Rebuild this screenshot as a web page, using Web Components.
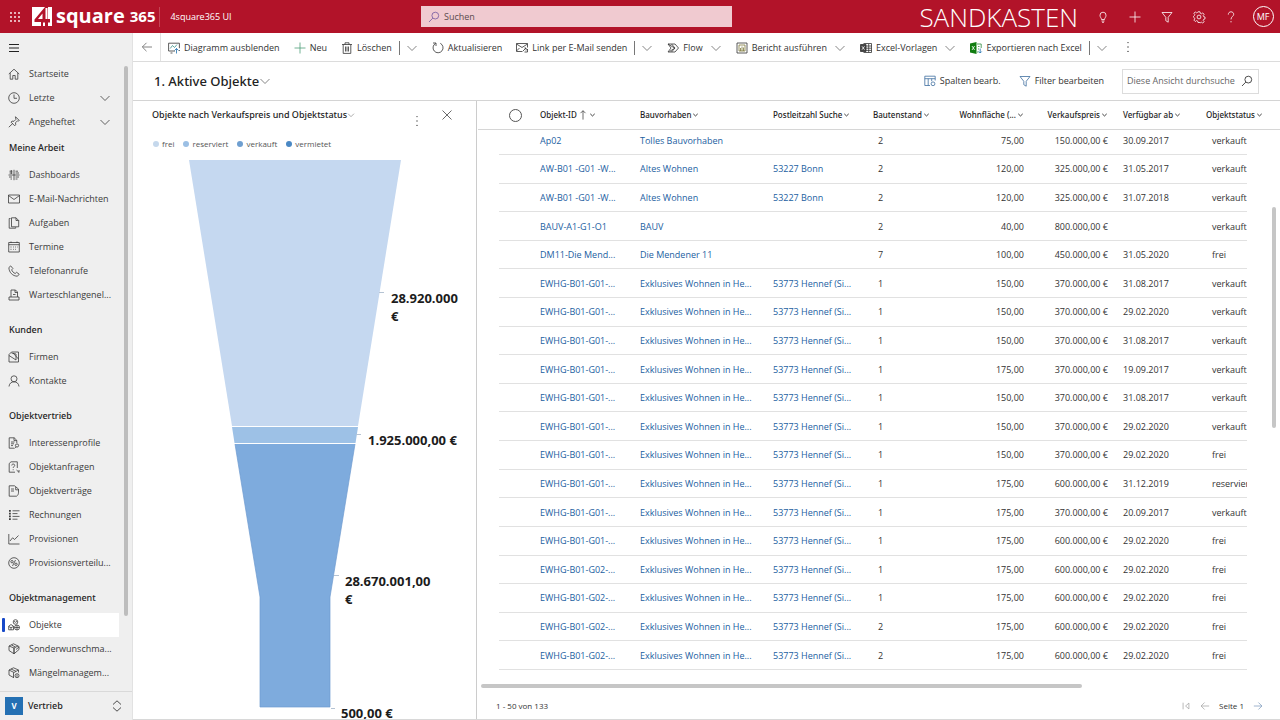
<!DOCTYPE html>
<html lang="de">
<head>
<meta charset="utf-8">
<title>4square365 UI – Aktive Objekte</title>
<style>
  body { margin: 0; font: 9px/12px "Open Sans", "Noto Sans", sans-serif; color: #333; background: #fff; }
</style>
</head>
<body>
<app-shell>
  <top-bar slot="top"></top-bar>
  <side-nav slot="side"></side-nav>
  <command-bar slot="commands"></command-bar>
  <view-bar slot="view" heading="1. Aktive Objekte"></view-bar>
  <funnel-chart slot="chart" heading="Objekte nach Verkaufspreis und Objektstatus"></funnel-chart>
  <data-grid slot="grid"></data-grid>
</app-shell>

<script>
const ICONS = {
  waffle: '<g fill="currentColor" stroke="none"><circle cx="2" cy="2" r=".9"/><circle cx="6" cy="2" r=".9"/><circle cx="10" cy="2" r=".9"/><circle cx="2" cy="6" r=".9"/><circle cx="6" cy="6" r=".9"/><circle cx="10" cy="6" r=".9"/><circle cx="2" cy="10" r=".9"/><circle cx="6" cy="10" r=".9"/><circle cx="10" cy="10" r=".9"/></g>',
  menu: '<path d="M1 2.5h10M1 6h10M1 9.5h10" stroke-width="1.1"/>',
  search: '<circle cx="7.3" cy="4.6" r="3.4"/><path d="M4.8 7.1 1 11"/>',
  bulb: '<path d="M4.5 8.5C4.5 7 3 6.400 3 4.200a3 3 0 0 1 6 0C9 6.400 7.500 7 7.500 8.500zM4.500 10h3M5 11.300h2"/>',
  plus: '<path d="M6 .5v11M.5 6h11"/>',
  filter: '<path d="M1 1.500h10L7.200 6.300v4.900l-2.400-1.500V6.300z"/>',
  gear: '<path d="M5 .8h2l.3 1.500 1.100.500 1.300-.900 1.400 1.400-.900 1.300.500 1.100 1.300.300v1.900l-1.300.400-.500 1.100.900 1.300-1.400 1.400-1.300-.900-1.100.500L7 11.500H5l-.300-1.400-1.100-.500-1.300.900L.900 9.100l.900-1.300-.500-1.100L.500 6.200V5.500l.800-.800.500-1.100L.900 2.300 2.300.900l1.300.900 1.100-.500z"/><circle cx="6" cy="6" r="1.900"/>',
  help: '<path d="M3.300 3.600C3.300 1.800 4.500.800 6 .800s2.700 1 2.700 2.500C8.700 5.400 6 5.600 6 8.400M6 10v1.400"/>',
  back: '<path d="M11 6H1.500M5.500 1.800 1.300 6l4.200 4.200"/>',
  next: '<path d="M1 6h9.500M6.500 1.800 10.700 6l-4.200 4.200"/>',
  first: '<path d="M2.500 2v8M9.500 2.500v7L5.500 6z"/>',
  down: '<path d="m1.500 4 4.500 4.500L10.500 4"/>',
  small: '<path d="m2.200 3.200 3.800 3.600 3.800-3.600" stroke-width="1.500"/>',
  updown: '<path d="M2 4.500 6 .800l4 3.700M2 7.500l4 3.700 4-3.700"/>',
  dots: '<g fill="currentColor" stroke="none"><circle cx="6" cy="1.600" r=".7"/><circle cx="6" cy="6" r=".7"/><circle cx="6" cy="10.400" r=".7"/></g>',
  close: '<path d="m1.500 1.500 9 9M10.500 1.500l-9 9"/>',
  up: '<path d="M6 11.500V1M3 3.800 6 .800l3 3"/>',
  chart: '<path d="M7 9H.600V1.200h10.800v5" /><path d="m2.200 6.500 2.300-3 2 2 2.500-3" stroke="#3a8f86"/><path d="M8.500 11.500v-5m-2 2 2-2 2 2" stroke="#1c6fae"/><path d="M2.500 11h2M11.400 8v1" />',
  trash: '<path d="M1 2.500h10M4 2.500V.800h4v1.700M2.200 2.500v8.900h7.600V2.500M4.500 4.500v5M6 4.500v5M7.500 4.500v5"/>',
  refresh: '<path d="M8.300 1.300A5 5 0 1 1 3.600 1.400M1 1h3v3"/>',
  mail: '<path d="M.500 2h11v8H.500zM.500 2.500 6 6.500l5.500-4"/>',
  maillink: '<path d="M6.500 9.500h-6v-8h11v4M.500 2 6 5.500 11.500 2M.500 9l3-3"/><path d="m7 9 3-3m-1.500 0H10v1.500M10 8.500l1.500-1.500v3H8.500"/>',
  flow: '<path d="M1 2h7l3.500 4L8 10H1l3-4zM4.500 2 8 6l-3.500 4M1 2l6.500 4M8 6 2.500 9.500"/>',
  report: '<path d="M1 1h10v10H1z"/><path d="M3 3h6v6H3zM4.500 9V6M6 9V4.500M7.500 9V5.500" stroke="#7d7a3a"/>',
  xltemplate: '<path d="M3.500 1.500h8v9h-8M6 4h5.500M6 6.200h5.500M6 8.400h5.500M8.700 2v8.500"/><path d="M.500 2.500h5.500v7H.500z" fill="#444"/><path d="m2 4.300 2.500 3.400m0-3.400L2 7.700" stroke="#fff"/>',
  xlexport: '<path d="M0 1.500 6.500 0v12L0 10.500z" fill="#107c10" stroke="none"/><path d="M2 4l2.600 4M4.600 4 2 8" stroke="#fff"/><path d="M7 2h4.200v4M7 10h1.500M8 4.500h1.500M8 7h1" stroke="#2e8b3d"/><path d="M10.200 6.500v4.500m-1.500-1.500 1.500 1.500 1.500-1.500" stroke="#1c6fae"/>',
  columns: '<path d="M6 10.500H.800V1.200h10.400v4.300M.800 3.700h10.400M4.200 3.700v6.800M7.700 3.700v2.500"/><circle cx="9" cy="8.800" r="1.900"/>',
  home: '<path d="M.800 6 6 1.200 11.200 6M2.200 5v6.200h2.600V7.500h2.400v3.700h2.600V5"/>',
  clock: '<circle cx="6" cy="6" r="5.300"/><path d="M6 2.500V6.300h3"/>',
  pin: '<path d="M7.500.700 11.300 4.500l-1 .500-.800-.200-2 2 .200 2-1 1L3 6.100l1-1 2 .200 2-2-.400-1.300zM4.700 7.500.800 11.200"/>',
  dash: '<path d="M6 .800v10.400M.500 6h11M1.500 2.200h3M1.500 4h3M7.500 2.200h2.500M7.500 4h3.500M1 8h3M2.500 10H4M7.500 8h3.500M7.500 10h2M3.300 1v4"/>',
  task: '<path d="M2.500 1.500h-1.300v9.700h6.500v-1M3.500.800h4.500l2.700 2.700v6.300H3.500zM8 .800v2.700h2.700"/>',
  cal: '<path d="M.700 1.500h10.600v9.500H.700zM.700 3.700h10.600M2.500 6h1M5 6h.800M7.200 6h.800M9.200 6h.600M2.500 8.300h1M5 8.300h.800M7.200 8.300h.800M3 .500v1.500M9 .500v1.500"/>',
  phone: '<path d="M2.700.900.900 2.500c0 4.800 3.800 8.700 8.600 8.700l1.700-2-2.600-1.900-1.400 1.200C5.500 7.800 4.400 6.600 3.600 4.900L4.900 3.500z"/>',
  queue: '<path d="M3 8V1h4.500L9.500 3v5M3 8H1v3h10V8H9.500M3 8h6.500M7 1v2.500h2.500M5 5.500h2.500"/>',
  firm: '<path d="M1 11V3.500L3.500 1h7v10zM1 4.500l7 4.500V3L3.500 2M5 2l5.500 6"/>',
  person: '<circle cx="6" cy="3.800" r="3"/><path d="M1 11.500C1.300 8.500 3.300 6.800 6 6.800s4.700 1.700 5 4.700"/>',
  profile: '<path d="M6 11.200H1.200V.800h5l2.600 2.600V6M6 .800v2.800h2.800M3 5h3.500M3 6.800h3M3 8.600h2"/><circle cx="9" cy="8.500" r="1.600"/><path d="m8 9.800-1.500 1.700"/>',
  inquiry: '<path d="M7 11.200H1.200V2.500L3 .800h6.300V7M3.800 4.500C3.800 3.500 4.400 3 5.200 3s1.500.500 1.500 1.400C6.700 5.500 5.200 5.600 5.200 7M5.200 8.300v.900M8.500 9l2.500 2.300M11 9v2.500"/>',
  contract: '<path d="M3 11.200H1.200V.800h5.500l1 1M3 11.200h5.500c1.500-1 2-2 2-4V4L7.700 1.800v3h2.800M3 4h3M3 6h3"/>',
  list: '<path d="M4.500 1.800h7M4.500 4.600h5M4.500 7.400h7M4.500 10.200h5"/><path d="M1 1.800h1.800M1 4.600h1.800M1 7.400h1.800M1 10.200h1.800" stroke-width="1.800"/>',
  line: '<path d="M.800 1v10h10.700M2 8l2.600-3.200 2 1.700L10.500 2.500"/>',
  percent: '<circle cx="6" cy="6" r="5.300"/><circle cx="4" cy="4.700" r="1.200"/><circle cx="8" cy="7.300" r="1.200"/><path d="m7.500 3-3 6"/>',
  objects: '<circle cx="7.500" cy="3" r="2.300"/><path d="M.700 7.200 3 5.500l2.500 1.700v3.600H.700zM.700 7.500 3 8.700l2.500-1.200M3 8.700v2.100"/><circle cx="9" cy="8.500" r="2.500"/><path d="M9 6v5M6.500 8.500h5M6 2.300l1.500 1 1.500-1"/>',
  box: '<path d="M6 10.800 1 7.500V3l4.500-2.200L10 3l-4 2zM6 5v5.800M1 3l5 2M6 10.800l5-4.300V3.500L10 3M8 6.500 11 4M3.500 2l4 2"/>',
  boxwarn: '<path d="M6 10.800 1 8V3l4.500-2.200L10.500 3v2.500M1 3l5 2.500L10.500 3M5.500 5.500v5M3 2l5 2.300"/><circle cx="9" cy="8.700" r="2"/><path d="M9 7.500v2.400"/>'
};

const define = (name, css, html) => {
  customElements.define(name, class extends HTMLElement {
    connectedCallback() {
      if (this.shadowRoot) return;
      const root = this.attachShadow({ mode: 'open' });
      root.innerHTML = `<style>:host,*{box-sizing:border-box}button{all:unset;box-sizing:border-box;cursor:pointer;white-space:nowrap}input{font:inherit;color:inherit}${css}</style>` +
        (typeof html === 'function' ? html(this) : html);
    }
  });
};

define('ui-icon',
  ':host{display:inline-flex;flex:none;width:12px;height:12px}svg{width:100%;height:100%;overflow:visible}',
  el => `<svg viewBox="0 0 12 12" fill="none" stroke="currentColor" stroke-width=".8" aria-hidden="true">${ICONS[el.getAttribute('name')]}</svg>`);

define('app-shell', `
  :host{display:grid;grid-template:33px minmax(0,1fr)/133px minmax(0,1fr);height:100vh}
  .top{grid-column:1/3}
  main{display:flex;flex-direction:column;min-width:0;min-height:0;border-bottom:1px solid #d8d8d8}
  .split{display:flex;flex:1;min-height:0}
  ::slotted([slot=grid]){flex:1;min-width:0}`,
  `<div class="top"><slot name="top"></slot></div><slot name="side"></slot>
   <main><slot name="commands"></slot><slot name="view"></slot>
   <div class="split"><slot name="chart"></slot><slot name="grid"></slot></div></main>`);

define('top-bar', `
  :host{display:grid;grid-template-columns:421fr 311fr 548fr;align-items:center;height:33px;background:#b21329;color:#fff}
  .left,.right{display:flex;align-items:center;min-width:0}
  .waffle{width:30px;height:33px;display:flex;align-items:center;justify-content:center}
  .brand{display:flex;align-items:center;height:20px;color:#fff;text-decoration:none;font-weight:700;border-right:1px solid #c54555;padding:0 4px 0 2px;margin-right:10px}
  .brand svg{width:20px;height:20px;margin-right:4px}
  .name,.num{line-height:20px;padding-bottom:2px}
  .name{font-size:20px;margin-right:5px}
  .num{font-size:15px}
  .search{display:flex;align-items:center;gap:4px;height:21px;padding:0 7px;background:#f0cad0;color:#5c4a4e}
  .search ui-icon{color:#7257a0}
  .search input{flex:1;min-width:0;border:0;padding:0;background:none;outline:0}
  .search input::placeholder{color:inherit;opacity:1}
  .right{justify-content:flex-end;padding-right:1px}
  .env{font-size:26px;line-height:32px;font-weight:300;margin-right:9px}
  .right button{width:32px;height:32px;display:flex;align-items:center;justify-content:center}
  .me span{width:21px;height:21px;border:1px solid #fff;border-radius:50%;line-height:19px;text-align:center}`,
  `<div class="left"><button class="waffle" aria-label="App-Startfeld"><ui-icon name="waffle"></ui-icon></button>
   <a class="brand" href="#"><svg viewBox="0 0 20 20" aria-hidden="true"><path d="M0 0h13L2.500 12.500V15H9v4H0zM20 0v19h-4v-3.500h2V12h-2V0z" fill="#fff"/><path d="M10.500 6.500V12H6z" fill="#fff"/><path d="M14.500 1v11M12 15.500V19" stroke="#fff" stroke-width="2"/></svg><span class="name">square</span><span class="num">365</span></a><span>4square365 UI</span></div>
   <label class="search"><ui-icon name="search"></ui-icon><input type="text" placeholder="Suchen" aria-label="Suchen"></label>
   <div class="right"><span class="env">SANDKASTEN</span>
   <button aria-label="Assistent"><ui-icon name="bulb"></ui-icon></button><button aria-label="Neu"><ui-icon name="plus"></ui-icon></button><button aria-label="Filter"><ui-icon name="filter"></ui-icon></button><button aria-label="Einstellungen"><ui-icon name="gear"></ui-icon></button><button aria-label="Hilfe"><ui-icon name="help"></ui-icon></button><button class="me"><span>MF</span></button></div>`);

define('nav-item', `
  :host{display:block}
  a{display:flex;align-items:center;gap:9px;height:24px;padding:0 8px;color:#3b3b3b;text-decoration:none;position:relative;white-space:nowrap}
  .t{flex:1}
  :host([active]) a{background:#fff}
  :host([active]) a::before{content:"";position:absolute;left:2px;top:5px;width:3px;height:14px;border-radius:1px;background:#1749c8}`,
  el => `<a href="#"><ui-icon name="${el.getAttribute('icon')}"></ui-icon><span class="t"><slot></slot></span>${el.hasAttribute('more') ? '<ui-icon name="down"></ui-icon>' : ''}</a>`);

const NAV = [
  ['', ['home', 'Startseite'], ['clock', 'Letzte', 'more'], ['pin', 'Angeheftet', 'more']],
  ['Meine Arbeit', ['dash', 'Dashboards'], ['mail', 'E-Mail-Nachrichten'], ['task', 'Aufgaben'], ['cal', 'Termine'], ['phone', 'Telefonanrufe'], ['queue', 'Warteschlangenel...']],
  ['Kunden', ['firm', 'Firmen'], ['person', 'Kontakte']],
  ['Objektvertrieb', ['profile', 'Interessenprofile'], ['inquiry', 'Objektanfragen'], ['contract', 'Objektverträge'], ['list', 'Rechnungen'], ['line', 'Provisionen'], ['percent', 'Provisionsverteilu...']],
  ['Objektmanagement', ['objects', 'Objekte', 'active'], ['box', 'Sonderwunschma...'], ['boxwarn', 'Mängelmanagem...']]
];
define('side-nav', `
  :host{display:flex;flex-direction:column;min-height:0;background:#efefef;border-right:1px solid #e2e2e2}
  .menu{height:29px;padding:0 8px;display:flex;align-items:center;color:#222}
  nav{flex:1;min-height:0;overflow:hidden;position:relative;padding-right:13px}
  nav::after{content:"";position:absolute;right:4px;top:4px;bottom:75px;width:4px;border-radius:2px;background:#bdbdbd}
  h2{margin:0;font:500 9px/28px "Noto Sans","Open Sans",sans-serif;color:#222;padding-left:9px;padding-bottom:1px}
  section+section+section{padding-top:9px}
  .area{display:flex;align-items:center;height:29px;border-top:1px solid #d9d9d9;padding:0 9px 0 5px;font-family:"Noto Sans","Open Sans",sans-serif;font-weight:500;color:#222}
  .area b{width:18px;height:18px;line-height:18px;text-align:center;background:#2470b3;color:#fff;margin-right:5px;font-size:8px}
  .area span{flex:1}`,
  `<button class="menu" aria-label="Menü"><ui-icon name="menu"></ui-icon></button>
   <nav>${NAV.map(([h, ...items]) => `<section>${h ? `<h2>${h}</h2>` : ''}${items.map(([i, t, f = '']) => `<nav-item icon="${i}" ${f}>${t}</nav-item>`).join('')}</section>`).join('')}</nav>
   <button class="area"><b>V</b><span>Vertrieb</span><ui-icon name="updown"></ui-icon></button>`);

const CMDS = [
  ['chart', 'Diagramm ausblenden'], ['plus', 'Neu', '', 'green'], ['trash', 'Löschen', 'split'], ['refresh', 'Aktualisieren'],
  ['maillink', 'Link per E-Mail senden', 'split'], ['flow', 'Flow', 'menu'], ['report', 'Bericht ausführen', 'menu'],
  ['xltemplate', 'Excel-Vorlagen', 'menu'], ['xlexport', 'Exportieren nach Excel', 'split']
];
define('command-bar', `
  :host{display:flex;height:29px;border-bottom:1px solid #dcdcdc}
  .back{width:28px;display:flex;align-items:center;justify-content:center;border-right:1px solid #e2e2e2;margin-right:7px;color:#666}
  .cmd,.group{display:flex;align-items:center}
  .cmd{gap:4px}.group{margin-right:14px;padding-top:2px}
  .green ui-icon{color:#4fa07a}
  .split{border-left:1px solid #777;height:14px;padding-left:6px;margin-left:7px}
  .menu{margin-left:7px}
  .split,.menu{display:flex;align-items:center;color:#666}
  .more{display:flex;align-items:center}`,
  `<button class="back" aria-label="Zurück"><ui-icon name="back"></ui-icon></button>` +
  CMDS.map(([i, t, kind, cls = '']) => `<div class="group"><button class="cmd ${cls}"><ui-icon name="${i}"></ui-icon><span>${t}</span></button>${kind ? `<button class="${kind}" aria-label="${t}: weitere Optionen"><ui-icon name="down"></ui-icon></button>` : ''}</div>`).join('') +
  `<button class="more" aria-label="Weitere Befehle"><ui-icon name="dots"></ui-icon></button>`);

define('view-bar', `
  :host{display:flex;align-items:center;height:39px;border-bottom:1px solid #d4d4d4;padding:0 21px}
  h1{margin:0;font:500 13px/18px "Noto Sans","Open Sans",sans-serif;color:#222}
  .pick{display:flex;align-items:center;flex:1;color:#666}
  .act{display:flex;align-items:center;gap:4px;margin-right:18px}
  .act ui-icon{color:#3f6f9f}
  .find{display:flex;align-items:center;width:137px;height:25px;border:1px solid #dcdcdc;padding:0 5px 0 4px;color:#222}
  .find input{flex:1;min-width:0;border:0;outline:0;padding:0;background:none;text-overflow:clip}
  .find input::placeholder{color:#666;opacity:1}`,
  el => `<div class="pick"><h1>${el.getAttribute('heading')}</h1><ui-icon name="down"></ui-icon></div>
   <button class="act"><ui-icon name="columns"></ui-icon>Spalten bearb.</button>
   <button class="act"><ui-icon name="filter"></ui-icon>Filter bearbeiten</button>
   <label class="find"><input type="text" placeholder="Diese Ansicht durchsuche" aria-label="Diese Ansicht durchsuchen"><ui-icon name="search"></ui-icon></label>`);

define('funnel-chart', `
  :host{display:flex;flex-direction:column;width:344px;flex:none;border-right:1px solid #ccc;overflow:hidden}
  header{display:flex;align-items:center;height:29px;padding:0 23px 0 19px}
  h2{margin:0;font:500 9px/12px "Noto Sans","Open Sans",sans-serif;color:#222}
  .pick{display:flex;align-items:center;flex:1;color:#666}
  .pick ui-icon{width:8px;height:8px}
  header button{display:flex;color:#444}
  .dots{padding-top:12px;margin-right:18px}
  ul{list-style:none;display:flex;gap:9px;margin:0;padding:10px 20px;font-size:8px;line-height:12px;color:#555}
  li{display:flex;align-items:center;gap:3px}
  li::before{content:"";width:6px;height:6px;border-radius:50%;background:var(--c)}
  svg{display:block;width:343px;height:559px;flex:none;overflow:visible;font-size:13px;font-weight:700}
  text{fill:#1c1c1c}`,
  el => `<header><div class="pick"><h2>${el.getAttribute('heading')}</h2><ui-icon name="down"></ui-icon></div>
   <button class="dots" aria-label="Mehr"><ui-icon name="dots"></ui-icon></button><button aria-label="Schließen"><ui-icon name="close"></ui-icon></button></header>
   <ul><li style="--c:#c5d8ec">frei</li><li style="--c:#9bbfe4">reserviert</li><li style="--c:#6f9fd0">verkauft</li><li style="--c:#4a88c4">vermietet</li></ul>
   <svg viewBox="0 0 343 559" role="img" aria-label="Trichterdiagramm">
    <path d="M56 0H268L225 266H99z" fill="#c5d8f0"/>
    <path d="M99 267H225L222.500 283H101.500z" fill="#9dc1e6"/>
    <path d="M102 284H222L197 437V547H127V437z" fill="#7eabdd"/>
    <path d="M102 284 127 437V547H197V437L222 284" fill="none" stroke="#6f9bd0" stroke-width=".7"/>
    <path d="M246 132.500h5M223 274.500h5M201 415.500h5M198 548.500h4" stroke="#b5c3d3"/>
    <text x="258" y="143">28.920.000</text><text x="258" y="161">€</text>
    <text x="235" y="285">1.925.000,00 €</text>
    <text x="212" y="426">28.670.001,00</text><text x="212" y="444">€</text>
    <text x="208" y="558">500,00 €</text>
   </svg>`);

const E1 = 'EWHG-B01-G01-...', E2 = 'EWHG-B01-G02-...', EX = 'Exklusives Wohnen in He...', HN = '53773 Hennef (Si...';
const ROWS = [
  ['Ap02', 'Tolles Bauvorhaben', '', '2', '75,00', '150.000,00 €', '30.09.2017', 'verkauft'],
  ['AW-B01 -G01 -W...', 'Altes Wohnen', '53227 Bonn', '2', '120,00', '325.000,00 €', '31.05.2017', 'verkauft'],
  ['AW-B01 -G01 -W...', 'Altes Wohnen', '53227 Bonn', '2', '120,00', '325.000,00 €', '31.07.2018', 'verkauft'],
  ['BAUV-A1-G1-O1', 'BAUV', '', '2', '40,00', '800.000,00 €', '', 'verkauft'],
  ['DM11-Die Mend...', 'Die Mendener 11', '', '7', '100,00', '450.000,00 €', '31.05.2020', 'frei'],
  [E1, EX, HN, '1', '150,00', '370.000,00 €', '31.08.2017', 'verkauft'],
  [E1, EX, HN, '1', '150,00', '370.000,00 €', '29.02.2020', 'verkauft'],
  [E1, EX, HN, '1', '150,00', '370.000,00 €', '31.08.2017', 'verkauft'],
  [E1, EX, HN, '1', '175,00', '370.000,00 €', '19.09.2017', 'verkauft'],
  [E1, EX, HN, '1', '150,00', '370.000,00 €', '31.08.2017', 'verkauft'],
  [E1, EX, HN, '1', '150,00', '370.000,00 €', '29.02.2020', 'verkauft'],
  [E1, EX, HN, '1', '150,00', '370.000,00 €', '29.02.2020', 'frei'],
  [E1, EX, HN, '1', '175,00', '600.000,00 €', '31.12.2019', 'reserviert'],
  [E1, EX, HN, '1', '175,00', '370.000,00 €', '20.09.2017', 'verkauft'],
  [E1, EX, HN, '1', '175,00', '600.000,00 €', '29.02.2020', 'frei'],
  [E2, EX, HN, '1', '175,00', '600.000,00 €', '29.02.2020', 'frei'],
  [E2, EX, HN, '1', '175,00', '600.000,00 €', '29.02.2020', 'frei'],
  [E2, EX, HN, '2', '175,00', '600.000,00 €', '29.02.2020', 'frei'],
  [E2, EX, HN, '2', '175,00', '600.000,00 €', '29.02.2020', 'frei']
];
const HEADS = [['Objekt-ID', ''], ['Bauvorhaben', ''], ['Postleitzahl Suche', ''], ['Bautenstand', ''], ['Wohnfläche (...', 'r'], ['Verkaufspreis', 'r'], ['Verfügbar ab', ''], ['Objektstatus', '']];
define('data-grid', `
  :host{display:grid;grid-template-rows:minmax(0,1fr) auto auto;position:relative;padding-left:1px}
  .wrap{min-height:0;overflow:hidden}
  table{width:100%;height:100%;table-layout:fixed;border-collapse:separate;border-spacing:0}
  th,td{padding:0 8px;text-align:left;font-weight:400;white-space:nowrap;overflow:hidden;border-bottom:1px solid #e1e1e1}
  thead tr{height:29px}
  th{font:500 8px/12px "Noto Sans","Open Sans",sans-serif;color:#222;border-bottom-color:#d6d6d6}
  th button{display:inline-flex;align-items:center;gap:1px;vertical-align:middle}
  th ui-icon{width:7px;height:7px}
  th ui-icon.sort{width:10px;height:10px}
  td{padding-top:1px}
  tbody tr:first-child{height:25px}
  tbody tr:first-child td{padding-bottom:4px}
  td.edge{border:0;padding:0}
  td.n{padding-left:13px}
  td.s{padding-left:14px;padding-right:0}
  .r{text-align:right}
  td.r{padding-right:7px}
  th.r{padding:0 7px 0 0}
  a{color:#22609f;text-decoration:none}
  input[type=checkbox]{appearance:none;display:block;width:13px;height:13px;border:1px solid #555;border-radius:50%;margin:0 auto}
  th.c{padding:0}
  .v{position:absolute;right:4px;top:106px;width:4px;height:221px;border-radius:2px;background:#c6c6c6}
  .h{margin:14px 198px 0 3px;height:4px;border-radius:2px;background:#c6c6c6}
  footer{display:flex;align-items:center;justify-content:space-between;height:31px;padding:4px 17px 0 18px;font-size:8px;line-height:12px}
  .pages{display:flex;align-items:center;gap:9px;color:#999}
  .pages span{color:#333}
  .pages button{display:flex}
  .pages ui-icon{width:10px;height:10px}
  .pages .nx{color:#6f8fb5}`,
  `<div class="wrap"><table>
   <colgroup>${[21, 33, 100, 0, 100, 83, 83, 84, 83, 49, 33].map(w => w ? `<col style="width:${w}px">` : '<col>').join('')}</colgroup>
   <thead><tr><th></th><th class="c"><input type="checkbox" aria-label="Alle auswählen"></th>${HEADS.map(([h, c], i) => `<th scope="col" class="${c}" ${i === 7 ? 'colspan="2"' : ''}><button>${h}${i ? '' : '<ui-icon class="sort" name="up"></ui-icon>'}<ui-icon name="small"></ui-icon></button></th>`).join('')}</tr></thead>
   <tbody>${ROWS.map(r => `<tr><td class="edge"></td><td></td>${r.map((t, i) => `<td class="${['', '', '', 'n', 'r', 'r', '', 's'][i]}">${i < 3 && t ? `<a href="#">${t}</a>` : t}</td>`).join('')}<td class="edge"></td></tr>`).join('')}</tbody>
   </table></div><div class="v"></div><div class="h"></div>
   <footer><span>1 - 50 von 133</span><div class="pages"><button aria-label="Erste Seite"><ui-icon name="first"></ui-icon></button><button aria-label="Vorherige Seite"><ui-icon name="back"></ui-icon></button><span>Seite 1</span><button class="nx" aria-label="Nächste Seite"><ui-icon name="next"></ui-icon></button></div></footer>`);
</script>
</body>
</html>
